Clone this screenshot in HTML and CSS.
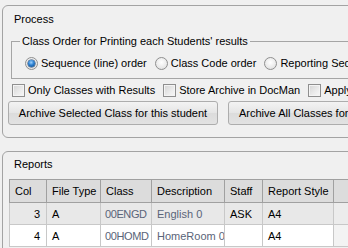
FILE: index.html
```html
<!DOCTYPE html>
<html>
<head>
<meta charset="utf-8">
<link rel="stylesheet" href="styles.css">
</head>
<body>
<div class="page">
  <section class="panel process">
    <div class="panel-title">Process</div>
    <fieldset class="group">
      <legend>Class Order for Printing each Students' results</legend>
      <div class="radio-row">
        <label class="opt first"><span class="radio on"></span>Sequence (line) order</label>
        <label class="opt"><span class="radio"></span>Class Code order</label>
        <label class="opt"><span class="radio"></span>Reporting Sequence order</label>
      </div>
    </fieldset>
    <div class="check-row">
      <label class="opt first"><span class="check"></span>Only Classes with Results</label>
      <label class="opt"><span class="check"></span>Store Archive in DocMan</label>
      <label class="opt"><span class="check"></span>Apply to all students</label>
    </div>
    <div class="button-row">
      <button class="btn wide">Archive Selected Class for this student</button>
      <button class="btn">Archive All Classes for this student</button>
    </div>
  </section>

  <section class="panel reports">
    <div class="panel-title">Reports</div>
    <table class="grid">
      <colgroup>
        <col class="c-col"><col class="c-type"><col class="c-class"><col class="c-desc"><col class="c-staff"><col class="c-style"><col class="c-rest">
      </colgroup>
      <thead>
        <tr><th>Col</th><th>File Type</th><th>Class</th><th>Description</th><th>Staff</th><th>Report Style</th><th class="rest"></th></tr>
      </thead>
      <tbody>
        <tr class="sel"><td class="num">3</td><td>A</td><td class="muted code">00ENGD</td><td class="muted">English 0</td><td>ASK</td><td>A4</td><td class="rest"></td></tr>
        <tr><td class="num">4</td><td>A</td><td class="muted code">00HOMD</td><td class="muted">HomeRoom 0</td><td></td><td>A4</td><td class="rest"></td></tr>
      </tbody>
    </table>
  </section>
</div>
</body>
</html>
```
FILE: styles.css
```css
html, body {
  margin: 0;
  padding: 0;
  background: #f0f0f0;
  width: 348px;
  height: 248px;
  overflow: hidden;
}
body {
  font-family: "Liberation Sans", Arial, sans-serif;
  font-size: 11px;
  color: #000;
}
.page {
  padding: 5px 0 0 2px;
  width: 480px;
}
.panel {
  border: 1px solid #a3a3a3;
  border-radius: 6px;
  background: #f0f0f0;
}
.process {
  height: 131px;
}
.reports {
  margin-top: 13px;
  height: 140px;
}
.panel-title {
  line-height: 14px;
  padding-left: 11px;
}
.process .panel-title {
  padding-top: 6px;
}
.reports .panel-title {
  padding-top: 5px;
}
.group {
  margin: 8px 0 0 8px;
  padding: 7px 0 7px 0;
  border: 1px solid #a5a5a5;
  border-right: none;
  min-inline-size: 0;
}
.group legend {
  margin-left: 8px;
  padding: 0 2px;
  line-height: 14px;
}
.radio-row, .check-row {
  display: flex;
  align-items: center;
  height: 16px;
  white-space: nowrap;
}
.radio-row .first { margin-left: 13px; }
.radio-row .opt + .opt { margin-left: 8px; }
.opt {
  display: flex;
  align-items: center;
  gap: 3px;
}
.radio {
  box-sizing: border-box;
  width: 13px;
  height: 13px;
  border-radius: 50%;
  border: 1px solid #8f8f8f;
  background: radial-gradient(circle at 50% 40%, #ffffff 0%, #e6e6e6 70%, #d0d0d0 100%);
  display: flex;
  align-items: center;
  justify-content: center;
}
.radio.on::after {
  content: "";
  width: 7px;
  height: 7px;
  border-radius: 50%;
  background: radial-gradient(circle at 45% 35%, #9fd3ff 0%, #2b7fd0 45%, #0c3e78 100%);
  box-shadow: 0 0 0 0.5px #1b3d66;
}
.check-row {
  margin-top: 3px;
}
.check-row .first { margin-left: 9px; }
.check-row .opt + .opt { margin-left: 8px; }
.check {
  box-sizing: border-box;
  width: 13px;
  height: 13px;
  border: 1px solid #8f8f8f;
  background: linear-gradient(135deg, #d4d4d4 0%, #ececec 60%, #f8f8f8 100%);
  box-shadow: inset 0 0 0 1px #f4f4f4;
}
.button-row {
  display: flex;
  gap: 10px;
  margin: 3px 0 0 5px;
}
.btn {
  box-sizing: border-box;
  height: 24px;
  padding: 0 10px;
  border: 1px solid #adadad;
  border-radius: 3px;
  background: linear-gradient(#f3f3f3, #e5e5e5 50%, #dcdcdc 51%, #e2e2e2);
  font-family: "Liberation Sans", Arial, sans-serif;
  font-size: 11px;
  color: #000;
  white-space: nowrap;
}
.btn.wide {
  width: 210px;
  padding: 0;
}
.grid {
  margin: 8px 0 0 6px;
  border-collapse: collapse;
  table-layout: fixed;
  width: 400px;
}
.c-col { width: 37px; }
.c-type { width: 54px; }
.c-class { width: 51px; }
.c-desc { width: 73px; }
.c-staff { width: 38px; }
.c-style { width: 71px; }
.grid th {
  height: 22px;
  padding: 0 2px 0 5px;
  background: #dcdcdc;
  border: 1px solid #a0a0a0;
  font-weight: normal;
  text-align: left;
  white-space: nowrap;
  overflow: hidden;
}
.grid td {
  height: 21px;
  padding: 0 2px 0 5px;
  border: 1px solid #c8c8c8;
  background: #fff;
  white-space: nowrap;
  overflow: hidden;
}
.grid tr.sel td {
  background: #e8e8e8;
}
.grid td.num {
  text-align: right;
  padding-right: 6px;
}
.grid td.muted {
  color: #5a6478;
}
.grid td.code {
  padding-left: 4px;
  padding-right: 0;
  letter-spacing: -0.4px;
}
.grid td.rest {
  background: #f3f3f3;
  border-left: 1px solid #d8d8d8;
}
.grid tr.sel td.rest {
  background: #ececec;
}
.grid th.rest {
  border-right: none;
}
```
